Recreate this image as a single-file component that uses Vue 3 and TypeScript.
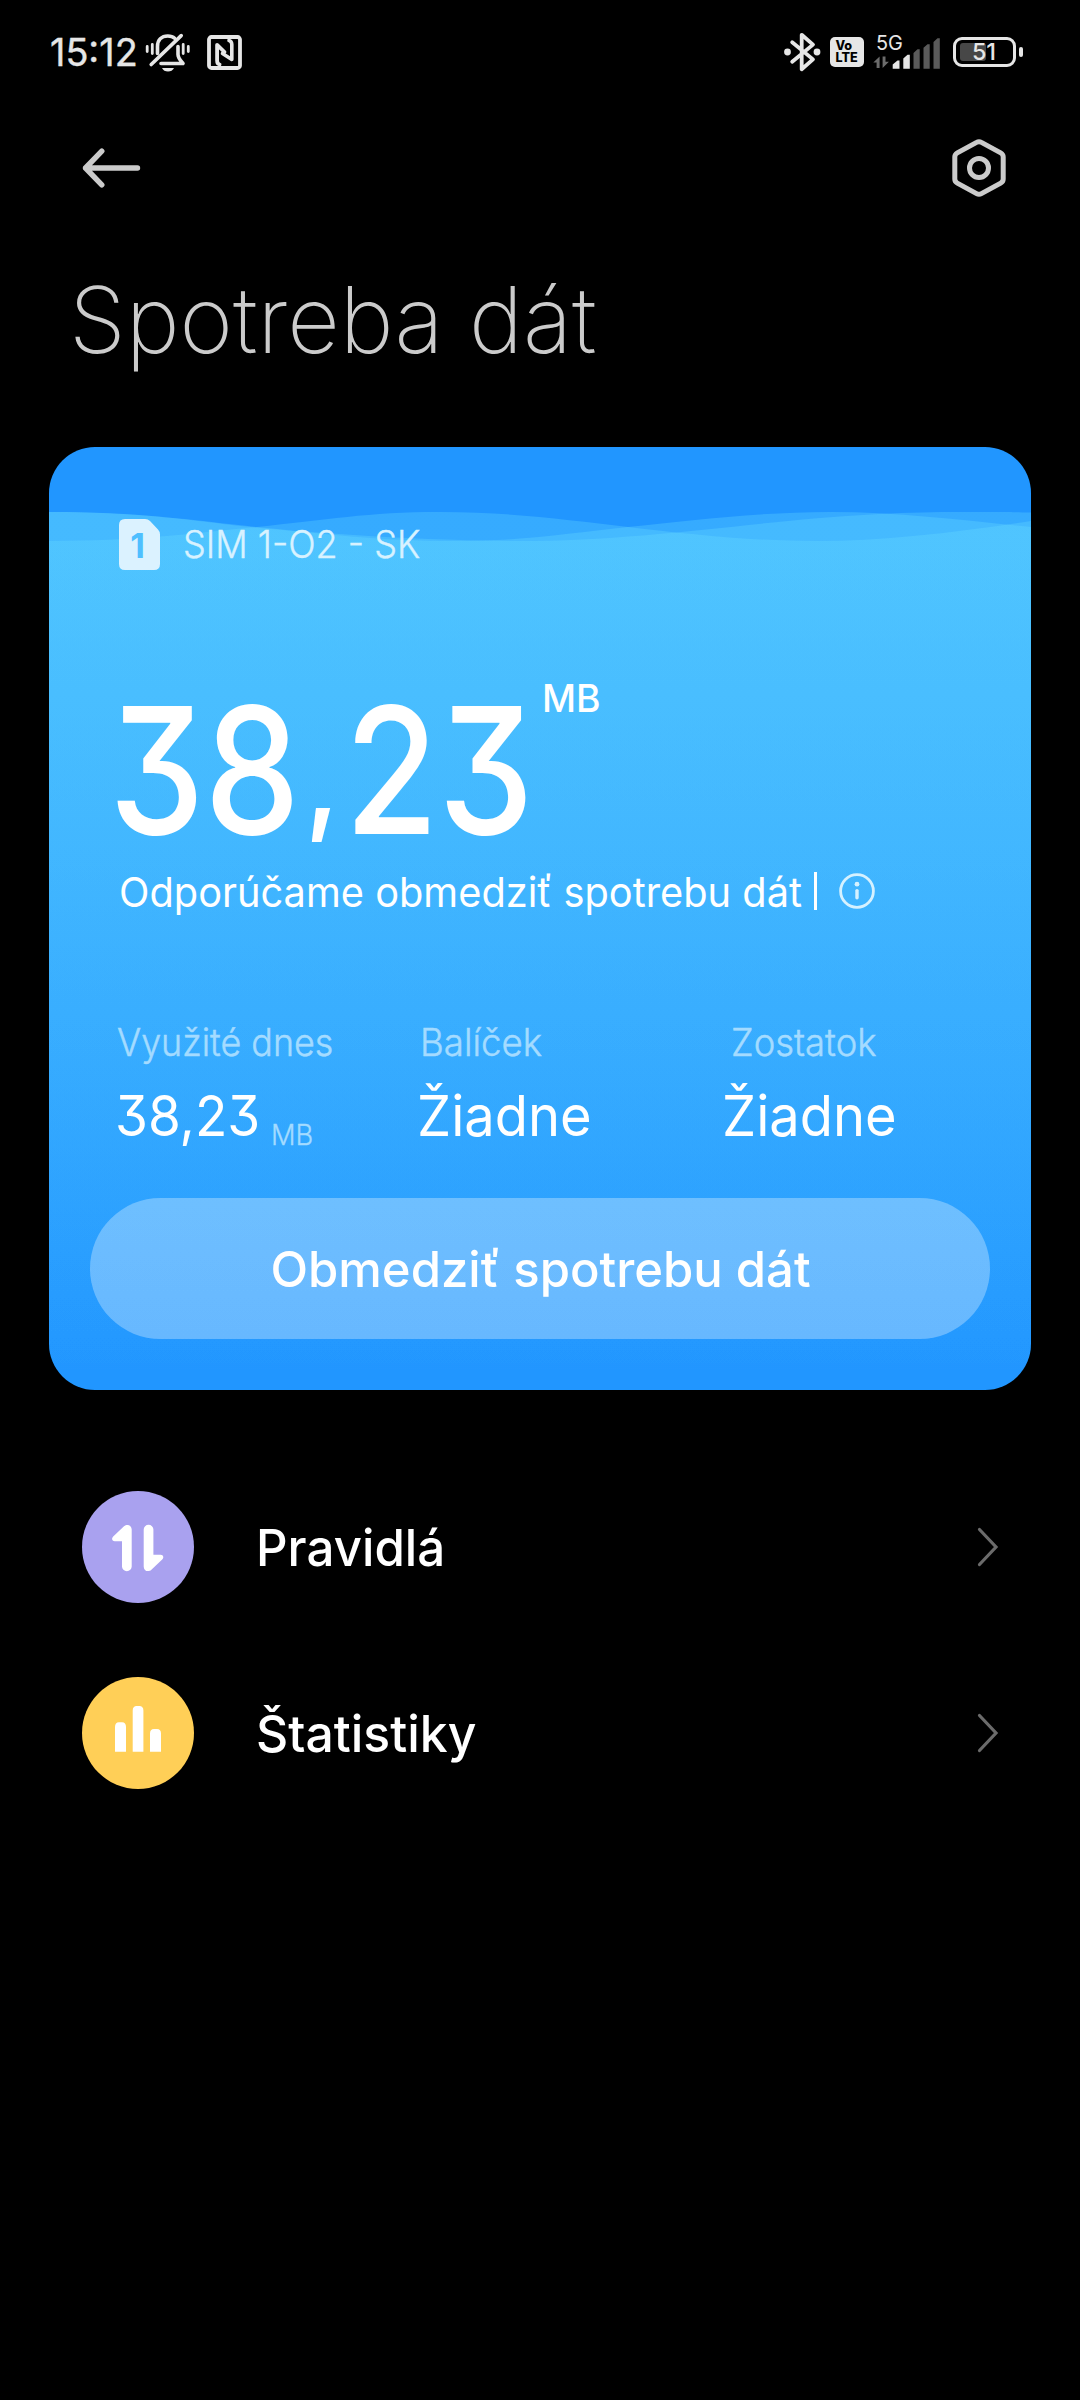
<script setup lang="ts">
interface Stat {
  label: string
  value: string
  unit?: string
}

const stats: Stat[] = [
  { label: 'Využité dnes', value: '38,23', unit: 'MB' },
  { label: 'Balíček', value: 'Žiadne' },
  { label: 'Zostatok', value: 'Žiadne' },
]
</script>

<template>
  <main class="screen">
    <header class="status">
      <span class="clock">15:12</span>
      <svg class="bell" width="46" height="40" viewBox="0 0 46 40" fill="none" stroke="#e6e6e6" stroke-width="3.6" stroke-linecap="round" stroke-linejoin="round">
        <path d="M12.5 20.5V13.5C12.5 7 16.5 3 22.8 3C26 3 28.2 3.9 29.6 5.2" />
        <path d="M33 13.5V21.5C33 25 35.5 27.5 38 30.5H16" />
        <path d="M6.2 31.5L36.2 2.6" />
        <path d="M2.2 13.5V18.5M7.3 11.5V20.5M38.2 11.5V20.5M43.3 13.5V18.5" stroke-width="2.8" />
        <path d="M17 35H29C27.8 37.4 25.8 38.6 23 38.6S18.2 37.4 17 35Z" fill="#e6e6e6" stroke="none" />
      </svg>
      <svg class="nfc" width="35" height="35" viewBox="0 0 35 35" fill="none" stroke="#e6e6e6" stroke-linecap="round" stroke-linejoin="round">
        <rect x="2" y="2" width="31" height="31" rx="2.5" stroke-width="3.8" />
        <path d="M12.6 29.5C10.6 29 10.1 27.8 10.1 25.5V9.8L17.5 17" stroke-width="3.8" />
        <path d="M22 5.4C24.2 5.9 24.8 7.2 24.8 9.5V24.4L15.5 18.5" stroke-width="3.6" />
      </svg>
      <div class="status-right">
        <svg class="bt" width="37" height="40" viewBox="0 0 37 40" fill="none" stroke="#e6e6e6" stroke-width="3.8" stroke-linejoin="round" stroke-linecap="round">
          <path d="M8.2 10.2L29 27.4L17.7 37.2V2.8L29 12.6L8.2 29.8" />
          <circle cx="3.5" cy="20" r="3.4" fill="#e6e6e6" stroke="none" />
          <circle cx="33" cy="20" r="3.4" fill="#e6e6e6" stroke="none" />
        </svg>
        <div class="volte"><span>Vo</span><span>LTE</span></div>
        <div class="signal">
          <span class="net">5G</span>
          <svg width="67" height="32" viewBox="0 0 67 32">
            <path d="M0.3 25.5L6.6 19.6V31H3.6V25.5ZM15.9 24.8L9.6 31V19.6H12.5V24.8Z" fill="#6c6c6c" />
            <path d="M19.7 31.7V27.5L24.5 23.6H26.5V31.7ZM30.3 31.7V21.6L34.5 17.8H36.8V31.7Z" fill="#e6e6e6" />
            <path d="M40.5 31.7V16L44.5 12.3H46.7V31.7ZM50.5 31.7V10.8L54.5 7.2H56.7V31.7ZM60.5 31.7V5L64.5 1.3H66.8V31.7Z" fill="#5a5a5a" />
          </svg>
        </div>
        <div class="battery"><span class="fill"></span><span class="pct">51</span></div>
        <span class="tip"></span>
      </div>
    </header>

    <nav class="bar">
      <svg width="60" height="42" viewBox="0 0 60 42" fill="none" stroke="#cbcbcb" stroke-width="5.4" stroke-linecap="round" stroke-linejoin="round">
        <path d="M4.5 21H56.5M20.8 4.2L4.5 21L20.8 37.8" />
      </svg>
      <svg width="54" height="58" viewBox="0 0 54 58" fill="none" stroke="#cbcbcb" stroke-width="5">
        <path d="M24.6 3.4Q27 2 29.4 3.4L48.7 13.9Q51.2 15.3 51.2 18V40Q51.2 42.7 48.7 44.1L29.4 54.6Q27 56 24.6 54.6L5.3 44.1Q2.8 42.7 2.8 40V18Q2.8 15.3 5.3 13.9Z" stroke-linejoin="round" />
        <circle cx="27" cy="29" r="9.5" />
      </svg>
    </nav>

    <h1 class="title"><span>Spotreba dát</span></h1>

    <section class="card">
      <svg class="waves" width="982" height="943" viewBox="0 0 982 943">
        <defs>
          <linearGradient id="water" gradientUnits="userSpaceOnUse" x1="0" y1="90" x2="0" y2="930">
            <stop offset="0" stop-color="#6adfff" stop-opacity="0.286" />
            <stop offset="1" stop-color="#6adfff" stop-opacity="0" />
          </linearGradient>
        </defs>
        <g fill="url(#water)">
          <path d="M0 65C90 65 140 73 208 80S330 94 404 94S520 86 579 80S710 65 781 65S920 74 982 80V943H0Z" />
          <path d="M0 94C90 94 140 87 208 80S320 65 391 65S520 73 579 80S700 94 768 94S910 85 982 74V943H0Z" />
          <path d="M0 65C110 65 160 77 222 82S380 94 470 94S640 84 724 75.5S860 65 914 65S960 65 982 65.6V943H0Z" />
        </g>
      </svg>

      <div class="body">
        <div class="sim">
          <svg width="41" height="51" viewBox="0 0 41 51">
            <path d="M6 0H26Q29 0 31 2L39 10.5Q41 12.5 41 15.5V45Q41 51 35 51H6Q0 51 0 45V6Q0 0 6 0Z" fill="#dbf2ff" />
            <text x="18.7" y="38.6" text-anchor="middle">1</text>
          </svg>
          <span>SIM 1-O2 - SK</span>
        </div>

        <div class="total">
          <strong><span>38<i>,</i>23</span></strong>
          <sup>MB</sup>
        </div>

        <div class="hint">
          <p><span>Odporúčame obmedziť spotrebu dát</span></p>
          <i class="rule"></i>
          <svg width="36" height="36" viewBox="0 0 36 36" fill="none" stroke="#d5f1ff">
            <circle cx="18" cy="18" r="16.4" stroke-width="2.8" />
            <path d="M18 17.6V24.8" stroke-width="3.4" stroke-linecap="round" />
            <circle cx="18" cy="11.2" r="2.4" fill="#d5f1ff" stroke="none" />
          </svg>
        </div>

        <dl class="stats">
          <div v-for="(s, i) in stats" :key="s.label" :class="'s' + i">
            <dt><span>{{ s.label }}</span></dt>
            <dd>
              <span class="val" :class="{ num: s.unit }">{{ s.value }}</span>
              <small v-if="s.unit">{{ s.unit }}</small>
            </dd>
          </div>
        </dl>

        <button class="limit" type="button"><span>Obmedziť spotrebu dát</span></button>
      </div>
    </section>

    <ul class="list">
      <li>
        <span class="badge rules">
          <svg width="112" height="112" viewBox="0 0 112 112" fill="#fff">
            <path id="arrow" d="M40 75.4V50.3H32.8C30 50.3 29.2 47.4 31.2 45.5L42 35.3C45.2 32.4 49.7 34.2 49.7 38.6V75.4A4.85 4.85 0 0 1 40 75.4Z" />
            <use href="#arrow" transform="rotate(180 55.7 57)" />
          </svg>
        </span>
        <span class="name">Pravidlá</span>
        <svg class="chev" width="24" height="42" viewBox="0 0 24 42"><path d="M3.5 3.5L20 21L3.5 38.5" /></svg>
      </li>
      <li>
        <span class="badge charts">
          <svg width="112" height="112" viewBox="0 0 112 112" fill="#fff">
            <path d="M33 74.7V50Q33 45.3 37 45.3H40Q44 45.3 44 50V74.7ZM50.7 74.7V33.5Q50.7 29 54.7 29H57.3Q61.4 29 61.4 33.5V74.7ZM68 74.7V56.5Q68 52 72 52H75Q79 52 79 56.5V74.7Z" />
          </svg>
        </span>
        <span class="name stat">Štatistiky</span>
        <svg class="chev" width="24" height="42" viewBox="0 0 24 42"><path d="M3.5 3.5L20 21L3.5 38.5" /></svg>
      </li>
    </ul>
  </main>
</template>

<style>
body {
  background: #000;
}
</style>

<style scoped>
* {
  box-sizing: border-box;
}

.screen {
  width: 1080px;
  height: 2400px;
  background: #000;
  color: #fff;
  font-family: "Inter", "Noto Sans", sans-serif;
  white-space: nowrap;
  overflow: hidden;
}

.status {
  display: flex;
  align-items: center;
  height: 104px;
  padding-left: 50px;
  color: #e6e6e6;
}

.clock {
  width: 95px;
  font-size: 38.6px;
  line-height: 50px;
  -webkit-text-stroke: 0.4px #e6e6e6;
  transform: scaleX(0.98);
  transform-origin: left;
}

.bell {
  margin-top: 2px;
}

.nfc {
  margin-left: 15.5px;
}

.status-right {
  display: flex;
  align-items: center;
  height: 104px;
  margin-left: 542px;
}

.volte {
  display: flex;
  flex-direction: column;
  align-items: flex-start;
  width: 34px;
  height: 30px;
  margin-left: 9.5px;
  padding: 3px 0 0 5.5px;
  border-radius: 5px;
  background: #e6e6e6;
  color: #000;
  font-size: 12.6px;
  font-weight: 800;
  line-height: 12px;
}

.signal {
  width: 67px;
  height: 34px;
  margin-left: 8.5px;
  display: grid;
}

.signal > * {
  grid-area: 1 / 1;
}

.signal svg {
  align-self: end;
}

.net {
  margin-top: -2.5px;
  padding-left: 3px;
  font-size: 20.5px;
  line-height: 20px;
  transform: scaleX(0.97);
  transform-origin: left;
}

.battery {
  display: grid;
  align-items: center;
  width: 63px;
  height: 30px;
  margin-left: 13.5px;
  border: 3px solid #e6e6e6;
  border-radius: 9px;
}

.battery > * {
  grid-area: 1 / 1;
}

.fill {
  width: 26px;
  height: 18px;
  margin-left: 4px;
  border-radius: 3px;
  background: #474747;
}

.pct {
  padding-right: 1px;
  text-align: center;
  font-size: 23.4px;
  font-weight: 500;
  line-height: 24px;
}

.tip {
  width: 4px;
  height: 10px;
  margin-left: 2.5px;
  border-radius: 2px;
  background: #e6e6e6;
}

.bar {
  display: flex;
  align-items: center;
  justify-content: space-between;
  height: 128px;
  padding: 0 74px 0 81px;
}

.title {
  margin: 26px 0 69px 68.5px;
  height: 120px;
  color: #cbcbcb;
  font-size: 91.5px;
  font-weight: 200;
  line-height: 123px;
}

.title span {
  display: inline-block;
  transform: scaleX(0.996);
  transform-origin: left;
}

.card {
  display: grid;
  width: 982px;
  height: 943px;
  margin-left: 49px;
  border-radius: 46px;
  background: #2196ff;
  overflow: hidden;
}

.card > * {
  grid-area: 1 / 1;
}

.body {
  padding-top: 72px;
}

.sim {
  display: flex;
  height: 51px;
  padding-left: 70px;
}

.sim text {
  fill: #4ebfff;
  font-size: 34px;
  font-weight: 700;
}

.sim span {
  margin-left: 23px;
  color: #d8f2ff;
  font-size: 37.6px;
  font-weight: 300;
  line-height: 51px;
  -webkit-text-stroke: 0.4px #d8f2ff;
  transform: scaleX(0.958);
  transform-origin: left;
}

.total {
  display: flex;
  height: 178px;
  margin-top: 107px;
  padding-left: 60px;
}

.total strong {
  width: 433px;
  padding-top: 8px;
  font-size: 176px;
  font-weight: 500;
  line-height: 169px;
  font-feature-settings: "cv09";
}

.total span {
  display: inline-block;
  transform: scaleX(0.862);
  transform-origin: left;
}

.total i {
  display: inline-block;
  width: 52px;
  font-size: 112px;
  font-style: normal;
  font-weight: 700;
  line-height: 100px;
  text-align: center;
  vertical-align: 14px;
}

.total sup {
  font-size: 38.4px;
  font-weight: 500;
  line-height: 42px;
  vertical-align: baseline;
  transform: scaleX(0.972);
  transform-origin: left;
}

.hint {
  display: flex;
  height: 50px;
  margin-top: 11px;
  padding-left: 70px;
}

.hint p {
  width: 684px;
  margin: 0;
  font-size: 41.1px;
  line-height: 52px;
}

.hint p span {
  display: inline-block;
  transform: scaleX(0.968);
  transform-origin: left;
}

.rule {
  width: 3.5px;
  height: 38px;
  margin: 6px 22px 0 10.5px;
  background: #fff;
}

.hint svg {
  margin-top: 7px;
}

.stats {
  display: grid;
  grid-template-columns: 301px 305px 1fr;
  height: 134px;
  margin: 100px 0 0;
  padding-left: 66px;
}

.stats dt {
  height: 50px;
  padding-left: 1.5px;
  color: #a4dbff;
  font-size: 37.7px;
  font-weight: 300;
  line-height: 52.6px;
  -webkit-text-stroke: 0.5px #a4dbff;
}

.stats dt span,
.val {
  display: inline-block;
  transform: scaleX(0.966);
  transform-origin: left;
}

.stats .s0 dt span {
  transform: scaleX(0.952);
}

.stats .s1 dt {
  padding-left: 4px;
}

.stats .s1 dt span {
  transform: scaleX(0.972);
}

.stats .s2 dt {
  padding-left: 10px;
}

.stats dd {
  display: flex;
  height: 70px;
  margin: 14px 0 0;
  font-size: 56.2px;
  line-height: 73px;
}

.s1 dd {
  padding-left: 0.5px;
}

.s2 dd {
  padding-left: 1px;
}

.val.num {
  width: 156px;
  font-feature-settings: "cv09";
  transform: scaleX(0.945);
}

.stats small {
  margin-top: 19px;
  color: #a4dbff;
  font-size: 28.1px;
  font-weight: 300;
  -webkit-text-stroke: 0.3px #a4dbff;
  transform: scaleX(0.97);
  transform-origin: left;
}

.limit {
  display: block;
  width: 900px;
  height: 141px;
  margin: 48px 0 0 41px;
  padding: 0;
  border: 0;
  border-radius: 71px;
  background: rgba(255, 255, 255, 0.31);
  color: #fff;
  font: 500 50px/142px "Inter", sans-serif;
}

.limit span {
  display: inline-block;
  padding-left: 2px;
  transform: scaleX(0.98);
}

.list {
  margin: 64px 0 0;
  padding: 0;
  list-style: none;
}

.list li {
  display: flex;
  align-items: center;
  height: 186px;
  padding: 0 80px 0 82px;
}

.badge {
  width: 112px;
  height: 112px;
  border-radius: 50%;
}

.rules {
  background: #a9a1ef;
}

.charts {
  background: #ffcf57;
}

.name {
  margin-left: 62px;
  padding-top: 2px;
  font-size: 50.7px;
  font-weight: 500;
  line-height: 70px;
  transform: scaleX(0.972);
  transform-origin: left;
}

.name.stat {
  transform: scaleX(0.984);
}

.chev {
  margin-left: auto;
  fill: none;
  stroke: #6b6b6b;
  stroke-width: 3.2;
  stroke-linecap: round;
}
</style>
